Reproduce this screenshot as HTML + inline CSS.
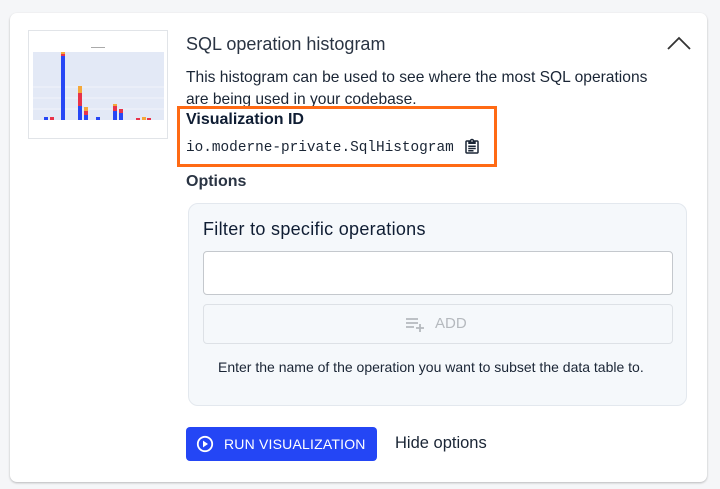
<!DOCTYPE html>
<html><head><style>
*{margin:0;padding:0;box-sizing:border-box}
body{width:720px;height:489px;background:#f5f6f8;font-family:"Liberation Sans",sans-serif;position:relative;overflow:hidden;color:#0f1d33}
.card{position:absolute;left:10px;top:13px;width:697px;height:469px;background:#fff;border-radius:7px;box-shadow:0 1px 2px rgba(0,0,0,.25)}
.abs{position:absolute;white-space:nowrap}
</style></head><body>
<div class="card"></div>
<div class="abs" style="left:28px;top:30px;width:140px;height:109px;border:1px solid #e1e4e8;background:#fff">
<svg width="138" height="107" viewBox="0 0 138 107">
<rect x="4" y="21" width="131" height="68" fill="#e3e9f6"/>
<line x1="4" y1="56" x2="135" y2="56" stroke="#fff" stroke-width=".6"/>
<line x1="4" y1="67" x2="135" y2="67" stroke="#fff" stroke-width=".6"/>
<line x1="4" y1="78" x2="135" y2="78" stroke="#fff" stroke-width=".6"/>
<rect x="62" y="16" width="14" height="1" fill="#aaa"/>
<g fill="#2747f5">
<rect x="15" y="86" width="4" height="3"/><rect x="32" y="25" width="4" height="64"/><rect x="49" y="75" width="4" height="14"/><rect x="55" y="84" width="4" height="5"/><rect x="67" y="86" width="4" height="3"/><rect x="84" y="80" width="4" height="9"/><rect x="90" y="82" width="4" height="7"/>
</g>
<g fill="#e8334a"><rect x="21" y="86" width="4" height="3"/><rect x="49" y="62" width="4" height="13"/><rect x="55" y="80" width="4" height="4"/><rect x="84" y="75" width="4" height="5"/><rect x="90" y="78" width="4" height="4"/><rect x="32" y="23" width="4" height="2"/><rect x="107" y="87" width="4" height="2"/><rect x="118" y="87" width="4" height="2"/></g>
<g fill="#f5a83a"><rect x="49" y="55" width="4" height="7"/><rect x="55" y="76" width="4" height="4"/><rect x="84" y="73" width="4" height="2"/><rect x="32" y="21" width="4" height="2"/><rect x="113" y="86" width="4" height="3"/></g>
</svg></div>
<div class="abs" style="left:186px;top:34px;font-size:18px;color:#2a3443">SQL operation histogram</div>
<svg class="abs" style="left:666px;top:35px" width="26" height="16"><path d="M2 14 L13 3 L24 14" fill="none" stroke="#333" stroke-width="1.8"/></svg>
<div class="abs" style="left:186px;top:67px;font-size:15.6px;line-height:22px;color:#1a2535">This histogram can be used to see where the most SQL operations<br>are being used in your codebase.</div>
<div class="abs" style="left:177px;top:106px;width:320px;height:61px;border:3px solid #ff6a14;background:#fff"></div>
<div class="abs" style="left:186px;top:111px;font-size:16px;font-weight:bold;color:#0f1d33">Visualization ID</div>
<div class="abs" style="left:186px;top:140px;font-family:'Liberation Mono',monospace;font-size:14.4px;color:#1a2535">io.moderne-private.SqlHistogram</div>
<svg class="abs" style="left:463px;top:138px" width="18" height="18" viewBox="0 0 24 24"><path d="M19 3h-4.2C14.4 1.8 13.3 1 12 1s-2.4.8-2.8 2H5c-1.1 0-2 .9-2 2v14c0 1.1.9 2 2 2h14c1.1 0 2-.9 2-2V5c0-1.1-.9-2-2-2zm-7 0c.55 0 1 .45 1 1s-.45 1-1 1-1-.45-1-1 .45-1 1-1zm7 16H5V5h2v3h10V5h2v14zM7 10h10v2H7zm0 3h10v2H7zm0 3h7v2H7z" fill="#1a2535"/></svg>
<div class="abs" style="left:186px;top:173px;font-size:16px;font-weight:bold;color:#2a3443">Options</div>
<div class="abs" style="left:188px;top:203px;width:499px;height:203px;background:#f5f8fb;border:1px solid #e3e8ee;border-radius:10px"></div>
<div class="abs" style="left:203px;top:219px;font-size:18px;color:#0f1d33;letter-spacing:.3px">Filter to specific operations</div>
<div class="abs" style="left:203px;top:251px;width:470px;height:44px;background:#fff;border:1px solid #c4c8cd;border-radius:4px"></div>
<div class="abs" style="left:203px;top:304px;width:470px;height:40px;border:1px solid #dde1e6;border-radius:4px"></div>
<svg class="abs" style="left:405px;top:316px" width="20" height="16" viewBox="0 0 20 16"><path d="M1 3h12M1 7h12M1 11h8M15 8v8M11 12h8" stroke="#b5b9be" stroke-width="1.8" fill="none"/></svg>
<div class="abs" style="left:435px;top:315px;font-size:15px;color:#b5b9be">ADD</div>
<div class="abs" style="left:218px;top:359px;font-size:14px;color:#1a2535">Enter the name of the operation you want to subset the data table to.</div>
<div class="abs" style="left:186px;top:427px;width:191px;height:34px;background:#2446f5;border-radius:4px"></div>
<svg class="abs" style="left:196px;top:435px" width="18" height="18" viewBox="0 0 18 18"><circle cx="9" cy="9" r="7.2" fill="none" stroke="#fff" stroke-width="1.8"/><path d="M7 5.6v6.8L12 9z" fill="#fff"/></svg>
<div class="abs" style="left:224px;top:436px;font-size:14px;color:#fff;letter-spacing:.2px">RUN VISUALIZATION</div>
<div class="abs" style="left:395px;top:434px;font-size:16.5px;color:#1a2535">Hide options</div>
</body></html>
